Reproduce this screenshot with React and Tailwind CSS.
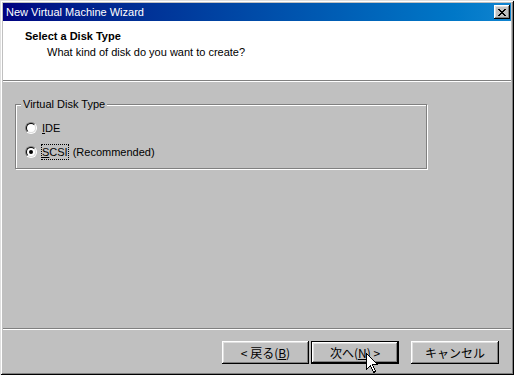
import React from "react";

const bevel =
  "shadow-[inset_-1px_-1px_0_#000,inset_1px_1px_0_#fff,inset_-2px_-2px_0_#808080,inset_2px_2px_0_#dfdfdf]";

function Radio({ checked }) {
  return (
    <div className="w-[12px] h-[12px] rounded-full border border-t-[#808080] border-l-[#808080] border-r-white border-b-white shrink-0">
      <div className="w-full h-full rounded-full border border-t-black border-l-black border-r-[#dfdfdf] border-b-[#dfdfdf] bg-white flex items-center justify-center">
        {checked && <div className="w-[4px] h-[4px] rounded-full bg-black" />}
      </div>
    </div>
  );
}

function Button({ children, isDefault, w }) {
  if (isDefault) {
    return (
      <div className={`${w} h-[23px] border border-black bg-[#c0c0c0]`}>
        <div
          className={`w-full h-full flex items-center justify-center ${bevel} text-[12px] font-['Noto_Sans_CJK_JP',sans-serif]`}
        >
          {children}
        </div>
      </div>
    );
  }
  return (
    <div
      className={`${w} h-[23px] bg-[#c0c0c0] flex items-center justify-center ${bevel} text-[12px] font-['Noto_Sans_CJK_JP',sans-serif]`}
    >
      {children}
    </div>
  );
}

export default function App() {
  return (
    <div className="relative w-[514px] h-[375px] bg-[#c0c0c0] p-[3px] flex flex-col shadow-[inset_1px_1px_0_#dfdfdf,inset_-1px_-1px_0_#000,inset_2px_2px_0_#fff,inset_-2px_-2px_0_#808080] font-['Liberation_Sans',Arial,sans-serif] text-[11px] leading-[13px] text-black overflow-hidden">
      {/* Title bar */}
      <div className="h-[18px] shrink-0 flex items-center justify-between bg-linear-to-r from-[#000080] to-[#1084d0]">
        <span className="pl-[3px] text-white text-[11px]">New Virtual Machine Wizard</span>
        <div className={`w-[16px] h-[14px] mr-[1px] bg-[#c0c0c0] ${bevel} flex items-center justify-center`}>
          <svg width="8" height="7" viewBox="0 0 8 7" shapeRendering="crispEdges">
            <path
              d="M0 0h2v1h-2zM6 0h2v1h-2zM1 1h2v1h-2zM5 1h2v1h-2zM2 2h4v1h-4zM3 3h2v1h-2zM2 4h4v1h-4zM1 5h2v1h-2zM5 5h2v1h-2zM0 6h2v1h-2zM6 6h2v1h-2z"
              fill="#000"
            />
          </svg>
        </div>
      </div>

      {/* Header */}
      <div className="h-[59px] shrink-0 bg-white pl-[22px] pt-[9px]">
        <div className="font-bold">Select a Disk Type</div>
        <div className="pl-[22px] mt-[3px]">What kind of disk do you want to create?</div>
      </div>
      <div className="h-[2px] shrink-0 border-t border-t-[#808080] border-b border-b-white" />

      {/* Body */}
      <div className="flex-1 pl-[12px] pt-[22px]">
        <div className="relative w-[412px] h-[65px] border border-[#808080] shadow-[1px_1px_0_#fff,inset_1px_1px_0_#fff]">
          <div className="absolute -top-[7px] left-[5px] px-[2px] bg-[#c0c0c0]">Virtual Disk Type</div>
          <div className="flex flex-col pl-[9px] pt-[15px] gap-[8px]">
            <div className="h-[16px] flex items-center">
              <Radio />
              <span className="ml-[4px] h-[16px] flex items-center border border-transparent">
                <span className="underline">I</span>DE
              </span>
            </div>
            <div className="h-[16px] flex items-center">
              <Radio checked />
              <span className="ml-[4px] h-[16px] flex items-center border border-dotted border-black">
                <span className="underline">S</span>CSI
              </span>
              <span className="ml-[4px]">(Recommended)</span>
            </div>
          </div>
        </div>
      </div>

      {/* Bottom separator */}
      <div className="h-[2px] shrink-0 border-t border-t-[#808080] border-b border-b-white" />

      {/* Footer */}
      <div className="h-[42px] shrink-0 flex justify-end items-start pt-[11px] pr-[12px]">
        <Button w="w-[87px]">
          &lt; 戻る(<span className="underline">B</span>)
        </Button>
        <div className="ml-[2px]">
          <Button isDefault w="w-[88px]">
            次へ(<span className="underline">N</span>) &gt;
          </Button>
        </div>
        <div className="ml-[12px]">
          <Button w="w-[88px]">キャンセル</Button>
        </div>
      </div>

      {/* Mouse cursor */}
      <svg
        className="absolute left-[366px] top-[353px]"
        width="13"
        height="22"
        viewBox="0 0 13 22"
        shapeRendering="crispEdges"
      >
        <path
          d="M0.5 0.5 L0.5 16.5 L4.5 12.5 L7.5 19.5 L9.5 18.5 L6.5 11.5 L11.5 11.5 Z"
          fill="#fff"
          stroke="#000"
          strokeWidth="1"
        />
      </svg>
    </div>
  );
}
